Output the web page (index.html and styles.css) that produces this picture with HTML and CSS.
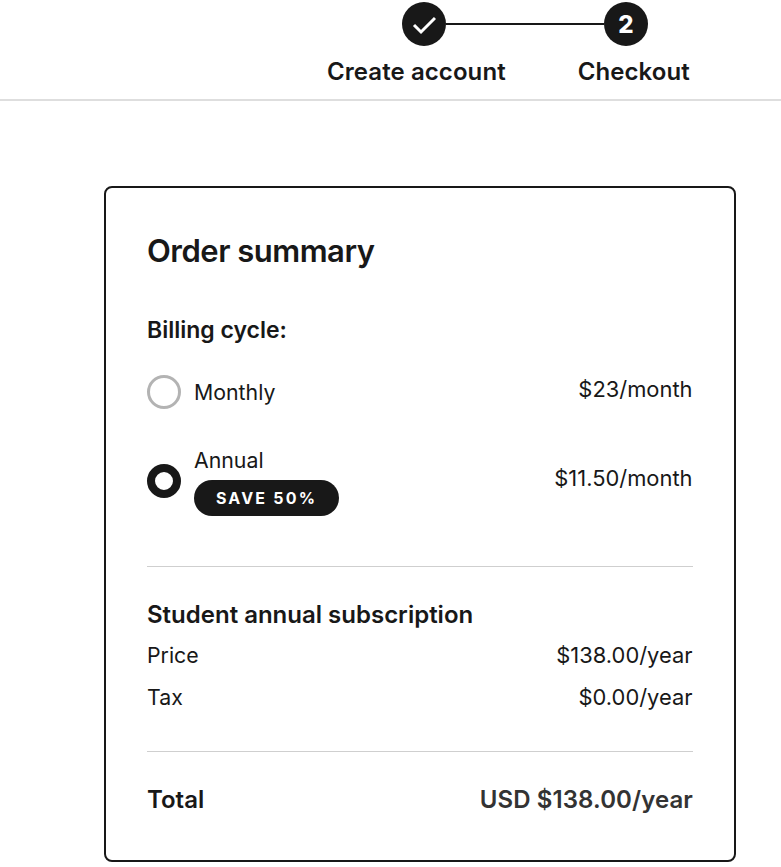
FILE: index.html
```html
<!DOCTYPE html>
<html lang="en">
<head>
<meta charset="utf-8">
<title>Order summary</title>
<link rel="stylesheet" href="styles.css">
</head>
<body>
<header class="top">
  <div class="stepper-dots">
    <span class="dot">
      <svg width="24" height="24" viewBox="0 0 24 24" fill="none"><path d="M2 13l7 7L23 6" stroke="#fff" stroke-width="3"/></svg>
    </span>
    <span class="connector"></span>
    <span class="dot">2</span>
  </div>
  <div class="stepper-labels">
    <span class="step-label">Create account</span>
    <span class="step-label">Checkout</span>
  </div>
</header>
<main class="card">
  <h1 class="title">Order summary</h1>
  <h2 class="subhead">Billing cycle:</h2>
  <div class="plan plan-monthly">
    <span class="radio"></span>
    <span class="plan-name">Monthly</span>
    <span class="plan-price">$23/month</span>
  </div>
  <div class="plan plan-annual">
    <span class="radio radio-on"></span>
    <div class="plan-stack">
      <span class="plan-name">Annual</span>
      <span class="badge">SAVE 50%</span>
    </div>
    <span class="plan-price">$11.50/month</span>
  </div>
  <hr class="rule rule-a">
  <h2 class="subhead sub-student">Student annual subscription</h2>
  <div class="row row-price"><span class="row-label">Price</span><span class="row-value">$138.00/year</span></div>
  <div class="row row-tax"><span class="row-label">Tax</span><span class="row-value">$0.00/year</span></div>
  <hr class="rule rule-b">
  <div class="total"><span class="total-label">Total</span><span class="total-value">USD $138.00/year</span></div>
</main>
</body>
</html>
```
FILE: styles.css
```css
* { box-sizing: border-box; }
html, body { margin: 0; padding: 0; background: #fff; }
body {
  font-family: Inter, "Liberation Sans", Arial, sans-serif;
  color: #181818;
  height: 867px;
  overflow: hidden;
}
.top {
  height: 101px;
  border-bottom: 2px solid #dedede;
  padding-top: 2px;
}
.stepper-dots {
  display: flex;
  align-items: center;
  margin-left: 402px;
  width: 246px;
}
.connector {
  flex: 1;
  height: 2px;
  background: #181818;
}
.dot {
  flex: none;
  width: 44px;
  height: 44px;
  border-radius: 50%;
  background: #181818;
  color: #fff;
  font-size: 24px;
  font-weight: 800;
  display: flex;
  align-items: center;
  justify-content: center;
}
.stepper-labels {
  display: flex;
  gap: 72px;
  margin: 12px 0 0 327px;
}
.step-label {
  font-size: 24px;
  line-height: 28px;
  font-weight: 600;
  letter-spacing: 0.08px;
  white-space: nowrap;
}
.card {
  width: 632px;
  height: 676px;
  margin: 85px 0 0 104px;
  border: 2px solid #181818;
  border-radius: 8px;
  padding: 0 41px;
}
.title {
  margin: 43px 0 0;
  font-size: 31px;
  line-height: 40px;
  font-weight: 600;
  letter-spacing: -0.5px;
}
.subhead {
  margin: 44px 0 0;
  font-size: 23px;
  line-height: 30px;
  font-weight: 600;
}
.plan {
  display: flex;
  align-items: center;
}
.plan-monthly { margin-top: 30px; height: 34px; }
.plan-annual { margin-top: 37px; height: 70px; }
.radio {
  width: 34px;
  height: 34px;
  border-radius: 50%;
  border: 3px solid #b3b3b3;
  flex: none;
  margin-right: 13px;
}
.radio-on {
  border: 8px solid #181818;
}
.plan-name {
  font-size: 21.3px;
  line-height: 28px;
}
.plan-stack {
  display: flex;
  flex-direction: column;
  align-items: flex-start;
  gap: 6px;
}
.plan-price {
  margin: 0 0.5px 6px auto;
  font-size: 21.9px;
  line-height: 28px;
}
.badge {
  background: #181818;
  color: #fff;
  border-radius: 18px;
  height: 36px;
  width: 145px;
  display: flex;
  align-items: center;
  justify-content: center;
  font-size: 16px;
  font-weight: 700;
  letter-spacing: 2.2px;
}
.rule {
  border: 0;
  height: 1px;
  background: #cfcfcf;
  margin: 0;
}
.rule-a { margin-top: 50px; }
.subhead.sub-student { margin-top: 33px; font-size: 24px; }
.row {
  display: flex;
  justify-content: space-between;
  line-height: 28px;
}
.row-label { font-size: 21.3px; }
.row-value { font-size: 21.9px; margin-right: 0.5px; }
.row-price { margin-top: 11px; }
.row-tax { margin-top: 14px; }
.rule-b { margin-top: 40px; }
.total {
  display: flex;
  justify-content: space-between;
  align-items: center;
  margin-top: 33px;
  line-height: 30px;
  font-weight: 600;
}
.total-label { font-size: 24px; }
.total-value { font-size: 24px; letter-spacing: 0.1px; color: #333; }
```
